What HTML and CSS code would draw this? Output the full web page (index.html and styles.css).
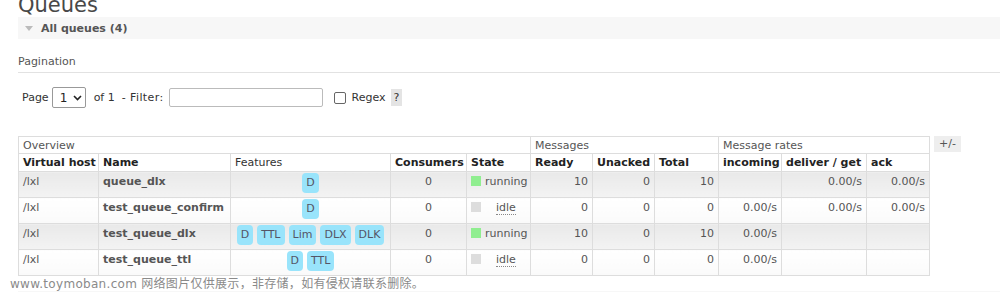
FILE: index.html
```html
<!DOCTYPE html>
<html lang="en">
<head>
    <meta charset="UTF-8">
    <title>Queues</title>
    <link rel="stylesheet" href="styles.css">
</head>
<body>
    <div class="page">
        <h1 class="title">Queues</h1>

        <!-- collapsible section header -->
        <div class="section-bar">
            <span class="tri"></span>
            <span class="section-name">All queues (4)</span>
        </div>

        <div class="section-body">
            <h3 class="sub">Pagination</h3>
            <div class="filter-row">
                <span>Page</span>
                <div class="fake-select">
                    <span>1</span>
                    <svg width="9" height="6" viewBox="0 0 9 6"><path d="M1 1 L4.5 4.5 L8 1" fill="none" stroke="#222" stroke-width="1.6"/></svg>
                </div>
                <span class="of">of 1</span>
                <span class="flt">- Filter:</span>
                <div class="fake-input"></div>
                <span class="check"></span>
                <span class="regex">Regex</span>
                <span class="help">?</span>
            </div>

            <div class="table-row">
                <table class="list">
                    <colgroup>
                        <col style="width:80px"><col style="width:132px"><col style="width:160px">
                        <col style="width:76px"><col style="width:64px"><col style="width:62px">
                        <col style="width:62px"><col style="width:64px"><col style="width:63px">
                        <col style="width:85px"><col style="width:63px">
                    </colgroup>
                    <thead>
                        <tr class="group">
                            <th colspan="5">Overview</th>
                            <th colspan="3">Messages</th>
                            <th colspan="3">Message rates</th>
                        </tr>
                        <tr class="heads">
                            <th class="b">Virtual host</th>
                            <th class="b">Name</th>
                            <th>Features</th>
                            <th class="b">Consumers</th>
                            <th class="b">State</th>
                            <th class="b">Ready</th>
                            <th class="b">Unacked</th>
                            <th class="b">Total</th>
                            <th class="b">incoming</th>
                            <th class="b">deliver / get</th>
                            <th class="b">ack</th>
                        </tr>
                    </thead>
                    <tbody>
                        <tr class="alt1">
                            <td class="vh">/lxl</td>
                            <td class="name">queue_dlx</td>
                            <td class="feat"><span class="tag">D</span></td>
                            <td class="c">0</td>
                            <td><span class="dot green"></span>running</td>
                            <td class="r">10</td>
                            <td class="r">0</td>
                            <td class="r">10</td>
                            <td class="r"></td>
                            <td class="r">0.00/s</td>
                            <td class="r">0.00/s</td>
                        </tr>
                        <tr class="alt2">
                            <td class="vh">/lxl</td>
                            <td class="name">test_queue_confirm</td>
                            <td class="feat"><span class="tag">D</span></td>
                            <td class="c">0</td>
                            <td><span class="dot grey"></span><span class="idle">idle</span></td>
                            <td class="r">0</td>
                            <td class="r">0</td>
                            <td class="r">0</td>
                            <td class="r">0.00/s</td>
                            <td class="r">0.00/s</td>
                            <td class="r">0.00/s</td>
                        </tr>
                        <tr class="alt1">
                            <td class="vh">/lxl</td>
                            <td class="name">test_queue_dlx</td>
                            <td class="feat"><span class="tag">D</span><span class="tag">TTL</span><span class="tag">Lim</span><span class="tag">DLX</span><span class="tag">DLK</span></td>
                            <td class="c">0</td>
                            <td><span class="dot green"></span>running</td>
                            <td class="r">10</td>
                            <td class="r">0</td>
                            <td class="r">10</td>
                            <td class="r">0.00/s</td>
                            <td class="r"></td>
                            <td class="r"></td>
                        </tr>
                        <tr class="alt2">
                            <td class="vh">/lxl</td>
                            <td class="name">test_queue_ttl</td>
                            <td class="feat"><span class="tag">D</span><span class="tag">TTL</span></td>
                            <td class="c">0</td>
                            <td><span class="dot grey"></span><span class="idle">idle</span></td>
                            <td class="r">0</td>
                            <td class="r">0</td>
                            <td class="r">0</td>
                            <td class="r">0.00/s</td>
                            <td class="r"></td>
                            <td class="r"></td>
                        </tr>
                    </tbody>
                </table>
                <span class="toggle">+/-</span>
            </div>
        </div>
    </div>

    <div class="watermark">www.toymoban.com 网络图片仅供展示，非存储，如有侵权请联系删除。</div>
    <div class="band"></div>
</body>
</html>
```

FILE: styles.css
```css
/* ------ base ------ */
*,*::before,*::after{box-sizing:border-box;}
body{
    margin:0;
    font-family:"DejaVu Sans",Verdana,sans-serif;
    font-size:11px;
    color:#444;
    background:#fff;
    overflow:hidden;
}
.page{padding-left:18px;}
.title{
    margin:-7px 0 0 0;
    font-size:21px;
    font-weight:normal;
    line-height:24px;
    color:#484848;
}

/* ------ section header ------ */
.section-bar{
    display:flex;
    align-items:center;
    height:22px;
    background:#f7f7f7;
    padding-left:7px;
}
.tri{
    width:0;height:0;
    border-left:4px solid transparent;
    border-right:4px solid transparent;
    border-top:5px solid #bbb;
    margin-right:8px;
}
.section-name{font-weight:bold;color:#555;font-size:11px;}

.sub{
    margin:15px 0 0 0;
    font-size:11px;
    font-weight:normal;
    color:#555;
    line-height:16px;
    padding-bottom:2px;
    border-bottom:1px solid #e2e2e2;
}

/* ------ pagination row ------ */
.filter-row{
    display:flex;
    align-items:center;
    margin-top:14px;
    padding-left:4px;
    color:#333;
    height:21px;
}
.fake-select{
    display:flex;
    align-items:center;
    gap:6px;
    width:34px;
    height:21px;
    margin:0 8px 0 3px;
    padding-left:7px;
    border:1px solid #999;
    border-radius:2px;
    font-size:12px;
    color:#222;
}
.of{margin-right:7px;}
.flt{letter-spacing:0.4px;}
.fake-input{
    width:154px;
    height:19px;
    margin-left:5px;
    border:1px solid #bbb;
    border-radius:2px;
}
.check{
    width:12px;height:12px;
    margin-left:11px;
    border:1px solid #666;
    border-radius:2px;
}
.regex{margin-left:6px;}
.help{
    margin-left:5px;
    background:#e4e4e4;
    padding:1px 3px;
    line-height:15px;
}

/* ------ queue table ------ */
.table-row{
    display:flex;
    align-items:flex-start;
    gap:4px;
    margin-top:28px;
}
table.list{
    table-layout:fixed;
    width:911px;
    border-collapse:collapse;
    border:1px solid #ddd;
}
table.list th,table.list td{
    border:1px solid #ddd;
    padding:0 4px;
    text-align:left;
    white-space:nowrap;
    overflow:hidden;
}
tr.group th{
    height:17px;
    font-weight:normal;
    color:#555;
    line-height:15px;
}
tr.heads th{
    height:18px;
    font-weight:normal;
    color:#333;
    font-size:11px;
}
tr.heads th.b{font-weight:bold;color:#222;font-size:11px;}
table.list td{
    height:26px;
    vertical-align:top;
    padding-top:3px;
    line-height:14px;
    color:#555;
}
tr.alt1 td{background:linear-gradient(#e9e9e9,#f3f3f3);}
tr.alt2 td{background:linear-gradient(#fff,#fafafa);}
td.vh{color:#777;}
td.name{font-weight:bold;color:#222;font-size:11px;}
td.c{text-align:center !important;}
td.r{text-align:right !important;}
td.feat{
    text-align:center !important;
    padding:1px 0 0 0 !important;
    font-size:0;
}
.tag{
    display:inline-block;
    font-size:11px;
    line-height:20px;
    padding:0 4px;
    margin:0 2px;
    border-radius:4px;
    background:#99e4fb;
    color:#556;
}
.dot{
    display:inline-block;
    width:10px;height:10px;
    margin-right:4px;
    vertical-align:-1px;
}
.dot.green{background:#90ee90;}
.dot.grey{background:#ddd;margin-right:15px;}
.idle{border-bottom:1px dotted #888;}

.toggle{
    background:#eee;
    color:#555;
    padding:0 5px;
    line-height:16px;
    height:16px;
}

/* ------ footer ------ */
.watermark{
    margin:1px 0 0 10px;
    font-family:"DejaVu Sans","Noto Sans CJK SC",sans-serif;
    font-size:12px;
    line-height:14px;
    color:#8a8a8a;
    letter-spacing:0.3px;
}
.band{
    margin-left:18px;
    height:10px;
    background:#f7f7f7;
}
```
